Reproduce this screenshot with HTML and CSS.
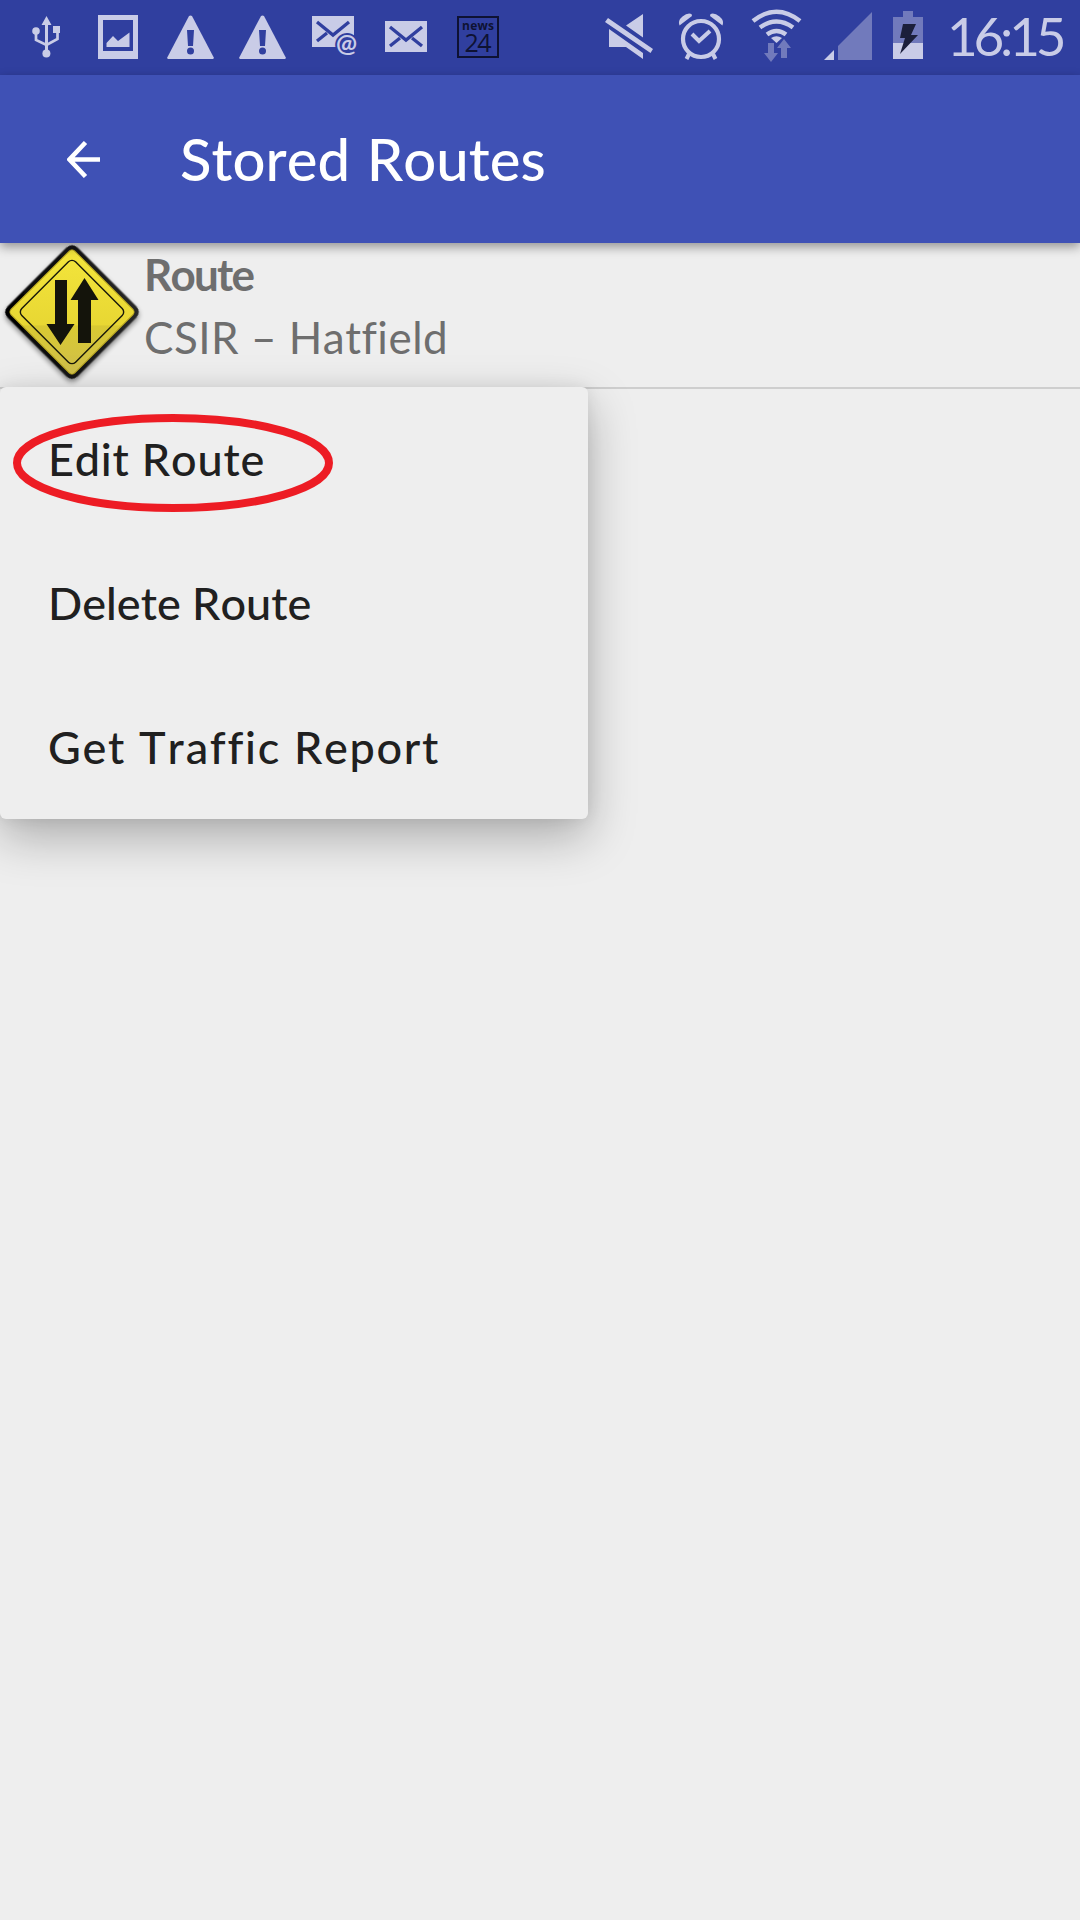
FILE: index.html
```html
<!DOCTYPE html>
<html lang="en">
<head>
<meta charset="utf-8">
<title>Stored Routes</title>
<link rel="stylesheet" href="styles.css">
</head>
<body>
<div class="status-bar">
  <svg class="status-icons" width="500" height="75" viewBox="0 0 500 75" fill="#c9cce7">
    <!-- usb -->
    <path d="M46.500 16l5 9h-10zM45 24h3v28h-3z"/>
    <circle cx="36" cy="31" r="3.800"/><circle cx="46.400" cy="53.500" r="4"/>
    <path d="M53 26h7v7h-7z"/>
    <path d="M36 32v8l10.500 5 11-6v-8" fill="none" stroke="#c9cce7" stroke-width="2.700"/>
    <!-- picture -->
    <path fill-rule="evenodd" d="M98 15h40v44h-40zM103 20v31h30v-31z"/>
    <path d="M106.500 47v-4l6.500-7 5 5 11.500-8.500v14.500z"/>
    <!-- warnings -->
    <g id="warning">
      <path d="M189 16q1.500-1 3 0l22 42-1 1h-45l-1-1z"/>
      <path fill="#303f9f" d="M187 30h7l-1 16h-5z"/><circle cx="190.500" cy="51" r="3.500" fill="#303f9f"/>
    </g>
    <use href="#warning" x="72"/>
    <!-- e-mail -->
    <path d="M312 16h42v31h-42z"/>
    <path d="M317 22l16 13 16-13M317 41l10-8" fill="none" stroke="#303f9f" stroke-width="3.300"/>
    <text class="at-sign" x="336" y="52">@</text>
    <!-- message -->
    <path d="M385 21h42v31h-42z"/>
    <path d="M390 27l16 13 16-13M390 46l10-8M422 46l-10-8" fill="none" stroke="#303f9f" stroke-width="3.300"/>
    <!-- news24 -->
    <path d="M458 17h40v40h-40z" fill="none" stroke="#0e1233" stroke-width="2"/>
    <text class="news-word" x="462" y="29.500" textLength="32">news</text>
    <text class="news-number" x="464.500" y="52" textLength="27">24</text>
  </svg>
  <svg class="system-icons" width="335" height="75" viewBox="590 0 335 75" fill="#c9cce7">
    <!-- muted -->
    <path d="M643 14v23.500l-17-12zM609 29l34 24v6l-17-12h-17zM608 18l45 31-2.500 4-45.500-31z"/>
    <!-- alarm -->
    <g fill="none" stroke="#c9cce7">
      <circle cx="701" cy="39" r="18" stroke-width="4.200"/>
      <path d="M692 34l7 7 11-10" stroke-width="4"/>
      <path d="M689 54l-2.500 5M713 54l2.500 5" stroke-width="4"/>
    </g>
    <path d="M679.500 25.500q-2-5 3-9t9-2.500l.5 2zM722.500 25.500q2-5-3-9t-9-2.500l-.5 2z"/>
    <!-- wifi -->
    <g fill="none" stroke="#c9cce7" stroke-width="4.500">
      <path d="M753 21q23.500-18.500 47 0M760 27.500q16.500-12 33 0M767 34.500q9.500-7 19 0"/>
    </g>
    <path d="M771 38q5.500-3.500 11 0l-5.500 5z"/>
    <path fill="#717abc" d="M768 43h6v10h4l-7 9-7-9h4zM781 58v-10h-4l7-9 7 9h-4v10z"/>
    <!-- signal -->
    <path d="M824 60l10-10v10z"/><path fill="#717abc" d="M838 46l34-34v48h-34z"/>
    <!-- battery -->
    <path fill="#717abc" d="M903 11h10v6h10v26h-30v-26h10z"/><path d="M893 43h30v16h-30z"/>
    <path fill="#1b1f3b" d="M903 24h13l-5 11h7l-18 19 5-16h-5z"/>
  </svg>
  <span class="clock">16:15</span>
</div>
<header class="app-bar">
  <svg class="back" width="34" height="37" viewBox="0 0 34 37" fill="none" stroke="#fff" stroke-width="4.500"><path d="M33 18.500H3M18.500 1.500l-16 17 16 17"/></svg>
  <h1 class="title">Stored Routes</h1>
</header>
<main class="content">
  <div class="route-row">
    <svg class="route-sign" width="144" height="144" viewBox="0 243 144 144">
      <defs>
        <linearGradient id="sign-yellow" x1="0" y1="0" x2="1" y2="1"><stop offset="0" stop-color="#f4e63c"/><stop offset=".6" stop-color="#e8d733"/><stop offset=".61" stop-color="#d9c932"/><stop offset="1" stop-color="#d0bf4c"/></linearGradient>
        <linearGradient id="sign-edge" x1="0" y1="1" x2="1" y2="0"><stop offset="0" stop-color="#000"/><stop offset="1" stop-color="#2a2a2a"/></linearGradient>
        <filter id="sign-shadow" x="-20%" y="-20%" width="140%" height="140%"><feDropShadow dx="2" dy="2" stdDeviation="2.500" flood-opacity=".45"/></filter>
      </defs>
      <g transform="rotate(45 72 312)">
        <rect x="22.500" y="262.500" width="99" height="99" rx="8" fill="url(#sign-edge)" filter="url(#sign-shadow)"/>
        <rect x="27" y="267" width="90" height="90" rx="4" fill="url(#sign-yellow)" stroke="#b7a51e"/>
        <rect x="34" y="274" width="76" height="76" rx="5" fill="none" stroke="#17170a" stroke-width="1.400"/>
      </g>
      <path fill="#14140b" d="M55 280h12v44h7.500l-14 21-14-21h8.500zM78 343v-43h-7.500l14-22 14 22h-7.500v43z"/>
    </svg>
    <div class="route-text">
      <div class="route-label">Route</div>
      <div class="route-name">CSIR – Hatfield</div>
    </div>
  </div>
  <div class="menu">
    <div class="menu-item edit">Edit Route</div>
    <div class="menu-item delete">Delete Route</div>
    <div class="menu-item report">Get Traffic Report</div>
    <svg class="highlight" width="322" height="100" viewBox="0 0 322 100"><ellipse cx="161" cy="50" rx="156" ry="45" fill="none" stroke="#ed1c24" stroke-width="8"/></svg>
  </div>
</main>
</body>
</html>
```
FILE: styles.css
```css
* { box-sizing: border-box; }
body {
  margin: 0;
  min-height: 1920px;
  background: #eee;
  font-family: Lato, "Noto Sans", sans-serif;
  font-weight: 500;
  font-kerning: none;
  font-variant-ligatures: none;
  white-space: nowrap;
}
.status-bar {
  display: flex;
  height: 75px;
  background: #303f9f;
}
.status-icons { flex: none; }
.system-icons { flex: none; margin-left: 90px; }
.at-sign { font: 700 25px Lato, sans-serif; stroke: #303f9f; stroke-width: 4px; paint-order: stroke; }
.news-word { font: 700 12px "Open Sans", sans-serif; fill: #0e1233; }
.news-number { font: 400 25px "Open Sans", sans-serif; fill: #0e1233; }
.clock {
  margin-left: 22px;
  line-height: 71px;
  font-size: 53px;
  font-weight: 400;
  letter-spacing: -4.2px;
  color: #c9cce7;
}
.app-bar {
  position: relative;
  z-index: 1;
  display: flex;
  align-items: center;
  height: 168px;
  padding-left: 67px;
  background: #3f51b5;
  box-shadow: 0 4px 10px rgba(0, 0, 0, .38);
}
.title {
  margin: 0 0 0 79px;
  font-size: 58px;
  font-weight: 500;
  line-height: 80px;
  letter-spacing: 0;
  word-spacing: 2px;
  color: #fff;
}
.content { position: relative; }
.route-row {
  display: flex;
  height: 146px;
  border-bottom: 2px solid #cecece;
  color: #6e6e6e;
}
.route-label, .route-name { font-size: 44px; line-height: 63px; }
.route-label { font-weight: 700; letter-spacing: -1.8px; }
.route-name { font-weight: 400; letter-spacing: .5px; }
.menu {
  position: absolute;
  top: 144px;
  left: 0;
  width: 588px;
  border-radius: 6px;
  background: #eee;
  box-shadow: 0 18px 48px rgba(0, 0, 0, .28), 0 0 16px rgba(0, 0, 0, .08);
  color: #202020;
}
.menu-item {
  height: 144px;
  padding-left: 48px;
  font-size: 45px;
  line-height: 144px;
}
.edit { letter-spacing: .8px; }
.report { letter-spacing: 1.7px; }
.highlight { position: absolute; top: 26px; left: 12px; }
```
